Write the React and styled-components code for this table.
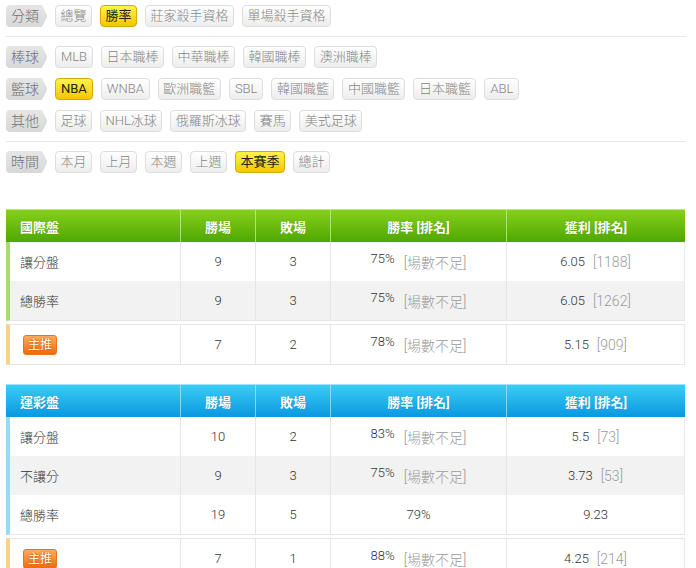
import styled, { createGlobalStyle, css } from "styled-components";

const GlobalStyle = createGlobalStyle`
  body {
    margin: 0;
    background: #fff;
    font-family: Roboto, "Noto Sans CJK TC", sans-serif;
  }
`;

const Page = styled.div`
  padding: 5px 10px 0 6px;
`;

const FilterRow = styled.div`
  display: flex;
  align-items: center;
  gap: 8px;
  height: 22px;
  margin-bottom: ${(p) => p.$gap || 10}px;
`;

const Tag = styled.div`
  width: 41px;
  height: 22px;
  flex: none;
  box-sizing: border-box;
  padding-left: 5px;
  line-height: 22px;
  font-size: 14px;
  font-weight: 300;
  color: #707070;
  background: linear-gradient(#e6e6e6, #d8d8d8);
  clip-path: path("M4 0 H35 Q36 0 37 2 L41 10 Q41.5 11 41 12 L37 20 Q36 22 35 22 H4 Q0 22 0 18 V4 Q0 0 4 0 Z");
`;

const Chip = styled.div`
  height: 22px;
  box-sizing: border-box;
  padding: 0 ${(p) => (p.$latin ? 5 : 4.5)}px;
  line-height: 20px;
  font-size: 13px;
  font-weight: 300;
  white-space: nowrap;
  color: #858585;
  border: 1px solid #dedede;
  border-radius: 4px;
  background: linear-gradient(#ffffff, #ededed);
  ${(p) =>
    p.$active &&
    css`
      color: #222;
      font-weight: 400;
      border-color: #d6ac00;
      background: linear-gradient(#fff44a, #f3c700);
    `}
`;

const Divider = styled.div`
  height: 1px;
  background: #e8e8e8;
  margin: 0 0 9px;
`;

const Board = styled.div`
  margin-top: ${(p) => p.$top}px;
  width: 679px;
  font-size: 13px;
  color: #333;
`;

const cols = "175px 75px 75px 176px 1fr";

const Head = styled.div`
  display: grid;
  grid-template-columns: ${cols};
  height: 33px;
  box-sizing: border-box;
  border-top: 1px solid ${(p) => (p.$blue ? "#9be6fa" : "#b9e77a")};
  background: ${(p) =>
    p.$blue
      ? "linear-gradient(#39cdf5, #0a98e0)"
      : "linear-gradient(#86d01c, #4fa700)"};
`;

const HeadCell = styled.div`
  display: flex;
  align-items: center;
  justify-content: ${(p) => (p.$left ? "flex-start" : "center")};
  padding-left: ${(p) => (p.$left ? "14px" : "0")};
  color: #fff;
  font-weight: bold;
  font-size: 13px;
  text-shadow: 0 0 1px rgba(0, 0, 0, 0.25);
  border-right: 1px solid ${(p) => (p.$blue ? "rgba(170,235,255,0.7)" : "rgba(190,240,130,0.8)")};
  &:last-child {
    border-right: none;
  }
`;

const Group = styled.div`
  border-left: 4px solid ${(p) => p.$accent};
  border-right: 1px solid #eaeaea;
  border-bottom: 1px solid #e6e6e6;
  ${(p) =>
    p.$pick &&
    css`
      margin-top: 3px;
      border-top: 1px solid #e6e6e6;
    `}
`;

const Row = styled.div`
  display: grid;
  grid-template-columns: 171px 75px 75px 176px 1fr;
  height: ${(p) => p.$h || 39}px;
  background: ${(p) => (p.$shade ? "#f2f2f2" : "#fff")};
`;

const Cell = styled.div`
  display: flex;
  align-items: center;
  justify-content: ${(p) => (p.$left ? "flex-start" : "center")};
  padding-left: ${(p) => (p.$left ? "10px" : "0")};
  font-weight: 300;
  border-right: 1px solid #e6e6e6;
  white-space: nowrap;
  &:last-child {
    border-right: none;
  }
`;

const Pct = styled.span`
  position: relative;
  top: -3px;
  margin-right: 9px;
`;

const Note = styled.span`
  color: #9a9a9a;
  font-size: 14px;
  font-weight: 300;
`;

const Profit = styled.span`
  margin-right: 8px;
`;

const Badge = styled.span`
  display: inline-block;
  width: 34px;
  height: 20px;
  box-sizing: border-box;
  line-height: 18px;
  text-align: center;
  font-size: 12px;
  font-weight: 400;
  color: #fff;
  text-shadow: 0 0 2px #a33d00;
  border: 1px solid #e7731c;
  border-radius: 3px;
  background: linear-gradient(#ffab5c, #f06a12);
  margin-left: 3px;
`;

const filters = [
  { tag: "分類", items: ["總覽", "勝率", "莊家殺手資格", "單場殺手資格"], active: "勝率" },
  { tag: "棒球", items: ["MLB", "日本職棒", "中華職棒", "韓國職棒", "澳洲職棒"] },
  { tag: "籃球", items: ["NBA", "WNBA", "歐洲職籃", "SBL", "韓國職籃", "中國職籃", "日本職籃", "ABL"], active: "NBA" },
  { tag: "其他", items: ["足球", "NHL冰球", "俄羅斯冰球", "賽馬", "美式足球"] },
  { tag: "時間", items: ["本月", "上月", "本週", "上週", "本賽季", "總計"], active: "本賽季" },
];

const tables = [
  {
    title: "國際盤",
    blue: false,
    accent: "#a9da6e",
    top: 36,
    rows: [
      { name: "讓分盤", w: 9, l: 3, pct: "75%", note: "[場數不足]", profit: "6.05", rank: "[1188]" },
      { name: "總勝率", w: 9, l: 3, pct: "75%", note: "[場數不足]", profit: "6.05", rank: "[1262]" },
    ],
    pick: { w: 7, l: 2, pct: "78%", note: "[場數不足]", profit: "5.15", rank: "[909]" },
  },
  {
    title: "運彩盤",
    blue: true,
    accent: "#93dcf3",
    top: 19,
    rows: [
      { name: "讓分盤", w: 10, l: 2, pct: "83%", note: "[場數不足]", profit: "5.5", rank: "[73]" },
      { name: "不讓分", w: 9, l: 3, pct: "75%", note: "[場數不足]", profit: "3.73", rank: "[53]" },
      { name: "總勝率", w: 19, l: 5, pct: "79%", profit: "9.23" },
    ],
    pick: { w: 7, l: 1, pct: "88%", note: "[場數不足]", profit: "4.25", rank: "[214]" },
  },
];

function RateCell({ pct, note }) {
  return (
    <Cell>
      {note ? <Pct>{pct}</Pct> : pct}
      {note && <Note>{note}</Note>}
    </Cell>
  );
}

function ProfitCell({ profit, rank }) {
  return (
    <Cell>
      {rank ? <Profit>{profit}</Profit> : profit}
      {rank && <Note>{rank}</Note>}
    </Cell>
  );
}

function StatTable({ t }) {
  const heads = ["勝場", "敗場", "勝率 [排名]", "獲利 [排名]"];
  return (
    <Board $top={t.top}>
      <Head $blue={t.blue}>
        <HeadCell $left $blue={t.blue}>{t.title}</HeadCell>
        {heads.map((h) => (
          <HeadCell key={h} $blue={t.blue}>{h}</HeadCell>
        ))}
      </Head>
      <Group $accent={t.accent}>
        {t.rows.map((r, i) => (
          <Row key={r.name} $shade={i % 2 === 1}>
            <Cell $left>{r.name}</Cell>
            <Cell>{r.w}</Cell>
            <Cell>{r.l}</Cell>
            <RateCell pct={r.pct} note={r.note} />
            <ProfitCell profit={r.profit} rank={r.rank} />
          </Row>
        ))}
      </Group>
      <Group $accent="#f6d28a" $pick>
        <Row $h={39}>
          <Cell $left>
            <Badge>主推</Badge>
          </Cell>
          <Cell>{t.pick.w}</Cell>
          <Cell>{t.pick.l}</Cell>
          <RateCell pct={t.pick.pct} note={t.pick.note} />
          <ProfitCell profit={t.pick.profit} rank={t.pick.rank} />
        </Row>
      </Group>
    </Board>
  );
}

export default function App() {
  return (
    <Page>
      <GlobalStyle />
      {filters.map((f, i) => (
        <div key={f.tag}>
          <FilterRow $gap={i === 0 || i === 3 ? 9 : 10}>
            <Tag>{f.tag}</Tag>
            {f.items.map((it) => (
              <Chip key={it} $active={it === f.active} $latin={/^[A-Z]+$/.test(it)}>
                {it}
              </Chip>
            ))}
          </FilterRow>
          {(i === 0 || i === 3) && <Divider />}
        </div>
      ))}
      {tables.map((t) => (
        <StatTable key={t.title} t={t} />
      ))}
    </Page>
  );
}
